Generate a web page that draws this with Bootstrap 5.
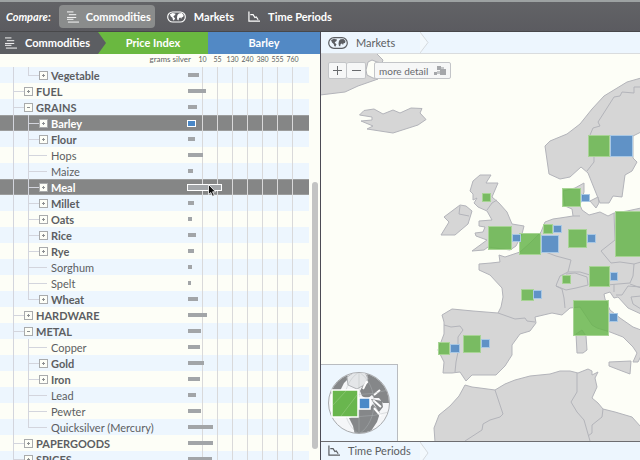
<!DOCTYPE html>
<html lang="en">
<head>
<meta charset="utf-8">
<meta name="viewport" content="width=device-width, initial-scale=1">
<title>Compare commodities</title>
<link href="https://cdn.jsdelivr.net/npm/bootstrap@5.3.0/dist/css/bootstrap.min.css" rel="stylesheet">
<style>
  :root { --ink: #5c5e62; --cream: #fdfef7; --ice: #edf6fe; --guide: #d3d5dd; --gridline: #d9d9da; }
  body { font-family: Lato, "Open Sans", sans-serif; font-size: 11px; line-height: 16px; color: var(--ink); background: var(--cream); }
  button { font: inherit; color: inherit; }
  .topbar { height: 32px; background: linear-gradient(#626366, #5b5b60); border-top: 2px solid #9da2a2; border-bottom: 1px solid #48484a; color: #fff; font-weight: 700; padding-left: 6px; }
  .tab-btn { height: 23px; border: 0; border-radius: 4px; background: none; padding: 0 6px 0 0; gap: 8px; }
  .tab-btn.chosen { background: #8a8c8c; padding: 0 4px 0 8px; gap: 7px; margin: 0 12px 0 8px; }
  .crumbs { height: 22px; flex: none; }
  .left-crumbs { background: #6ab840; color: #fff; font-weight: 700; }
  .crumb-dark { background: var(--ink); width: 106px; padding-left: 5px; gap: 8px; clip-path: polygon(0 0, 98px 0, 100% 50%, 98px 100%, 0 100%); }
  .crumb-blue { background: #5289c5; width: 112px; }
  .left-pane { background: var(--cream); }
  .scale { height: 13px; font-size: 8px; line-height: 10px; padding-right: 1px; }
  .scale-ticks { width: 128px; padding-left: 4px; font-size: 7px; }
  .scale-ticks span { width: 15px; text-align: center; }
  .tree-row { height: 16px; padding-left: 13px; }
  .tree-row:nth-child(odd) { background: var(--ice); }
  .tree-row.picked { background: #858686; color: #fff; box-shadow: inset 0 1px #9c9d9d, inset 0 -1px #9c9d9d; font-weight: 700; }
  .trunk { width: 15px; background: linear-gradient(var(--guide), var(--guide)) 0 0 / 1px 100% no-repeat; }
  .twig { width: 11px; background: linear-gradient(var(--guide), var(--guide)) 0 0 / 1px 100% no-repeat, linear-gradient(var(--guide), var(--guide)) 0 8px / 100% 1px no-repeat; }
  .twig.leaf { width: 19px; margin-right: 1px; }
  .twig.end { background-size: 1px 9px, 100% 1px; }
  .toggle { width: 9px; height: 9px; padding: 0; border: 1px solid #a9abac; background: linear-gradient(#8d9092, #8d9092) 50% 50% / 3px 1px no-repeat, linear-gradient(#8d9092, #8d9092) 50% 50% / 1px 3px no-repeat, var(--cream); }
  .toggle.open { background: linear-gradient(#8d9092, #8d9092) 50% 50% / 3px 1px no-repeat, var(--cream); }
  .label-text { margin-left: 3px; line-height: 18px; }
  .plot { width: 121px; padding-right: 16px; background: linear-gradient(90deg, transparent 14px, var(--gridline) 14px) 0 0 / 15px 100% content-box; }
  .bar { height: 4px; background: #a2a5a8; }
  .bar.framed { height: 7px; margin-left: -1px; border: 1px solid #fff; }
  .bar.barley { background: #4a87c6; }
  .rail { width: 11px; padding-left: 3px; }
  .thumb { width: 6px; height: 267px; margin-top: 115px; border-radius: 3px; background: #c3c4c4; }
  .pointer { left: 208px; top: 5px; z-index: 2; }
  .right-pane { border-left: 1px solid #4c4b55; }
  .right-crumbs { background: var(--ice); border-bottom: 1px solid #d9dcde; padding-left: 7px; gap: 8px; }
  .crumb-name { width: 56px; }
  .crumb-name.wide { width: 64px; }
  .map-tools { top: 8px; left: 7px; gap: 8px; }
  .tool { height: 17px; border: 1px solid #c3c5c8; border-radius: 2px; background: #f6f7f7; padding: 0; color: #696b6e; }
  .zoom-tool { width: 19px; }
  .more-tool { padding: 0 4px; gap: 6px; font-size: 10px; }
  .inset-globe { width: 77px; height: 77px; background: var(--ice); border-top: 1px solid #b9bcc0; border-right: 1px solid #b9bcc0; }
  .bottom-crumbs { height: 19px; background: var(--ice); border-top: 1px solid #6d6d70; padding-left: 7px; gap: 8px; flex: none; line-height: 20px; }
  .green-box { fill: #67b54b; fill-opacity: .84; stroke: #a8d495; stroke-width: 1; }
  .blue-box { fill: #5089c4; fill-opacity: .88; stroke: #a9c8e4; stroke-width: 1; }
</style>
<script src="https://cdn.jsdelivr.net/npm/bootstrap@5.3.0/dist/js/bootstrap.bundle.min.js" defer></script>
</head>
<body class="vh-100 d-flex flex-column overflow-hidden">

<svg class="d-none" aria-hidden="true">
  <symbol id="i-list" viewBox="0 0 13 12"><path d="M0 .5h7M2 3.500h8M0 6.500h10M0 8.500h7M1 11.500h12" stroke="currentColor" fill="none"/></symbol>
  <symbol id="i-world" viewBox="0 0 20 12"><rect x=".7" y=".7" width="18.6" height="10.6" rx="5.3" fill="none" stroke="currentColor" stroke-width="1.2"/><path d="M3 3l3-1.200 3 .7-.5 1.500-1.800 1.200.8 1.300 1 .7-1.200 2.500-1-.6-.6-2.200L4 5.500zM11 3.800l1.500-1.500 3-.4 2 2-.5 2.200-1.400.2-.6 1.600-1-1.500-1.300.6-.6 2.600-1.200-.8-.4-2.400z" fill="currentColor"/></symbol>
  <symbol id="i-trend" viewBox="0 0 13 12"><path d="M1 0v10.500h12M2.500 3.500h3l2 3 1.500-.5 2 3" stroke="currentColor" fill="none" stroke-width="1.300"/></symbol>
</svg>

<nav class="topbar d-flex align-items-center flex-shrink-0" aria-label="Compare">
  <em>Compare:</em>
  <button class="tab-btn chosen d-flex align-items-center" type="button"><svg width="12" height="12"><use href="#i-list"/></svg>Commodities</button>
  <button class="tab-btn d-flex align-items-center me-2" type="button"><svg width="19" height="12"><use href="#i-world"/></svg>Markets</button>
  <button class="tab-btn d-flex align-items-center" type="button"><svg width="12" height="12"><use href="#i-trend"/></svg>Time Periods</button>
</nav>

<main class="d-flex flex-grow-1 overflow-hidden">
  <section class="left-pane w-50 d-flex flex-column">
    <div class="crumbs left-crumbs d-flex">
      <div class="crumb-dark d-flex align-items-center"><svg width="12" height="12"><use href="#i-list"/></svg>Commodities</div>
      <div class="flex-grow-1 d-flex align-items-center justify-content-center pe-2">Price Index</div>
      <div class="crumb-blue d-flex align-items-center justify-content-center">Barley</div>
    </div>
    <div class="scale d-flex justify-content-end flex-shrink-0">
      <span>grams silver</span>
      <div class="scale-ticks d-flex"><span>10</span><span>55</span><span>130</span><span>240</span><span>380</span><span>555</span><span>760</span></div>
    </div>
    <div class="d-flex flex-grow-1 overflow-hidden">
      <ul class="list-unstyled mb-0 flex-grow-1" id="commodity-tree"></ul>
      <div class="rail"><div class="thumb"></div></div>
    </div>
  </section>

  <section class="right-pane w-50 d-flex flex-column">
    <div class="crumbs right-crumbs d-flex align-items-center">
      <svg width="20" height="12"><use href="#i-world"/></svg><span class="crumb-name">Markets</span>
      <svg class="h-100" width="9" viewBox="0 0 9 22" preserveAspectRatio="none"><path d="M0 0l8 11-8 11" fill="#f3f9fd" stroke="#d5d9dd"/></svg>
    </div>
    <div class="flex-grow-1 position-relative overflow-hidden">
      <svg class="d-block w-100 h-100" viewBox="321 54 319 387" preserveAspectRatio="xMinYMin slice" role="img" aria-label="Map of European markets">
        <g fill="#d6d6d6" stroke="#b3b4ba" stroke-linejoin="round">
          <path d="M320 53H376L383 60 382 63 377 62 372 60 368 62 366 70 367 75 373 78 378 79 358 86 345 92 320 95Z"/>
          <path d="M359.500 115L364 110.500 374 109 383 114 393 110 400 113 411 108 422 108.500 420 113 426 119.500 418 125 393 133 367 129 373 126 361 121 372 120 372 117Z"/>
          <path d="M641 78L627 82 604 96 592 109 580 124 567 134 550 141 545 146 549 174 560 179 570 177 581 167 588 173 600 203 609 203 613 196 622 197 625 175 632 171 637 162 633 158 633 136 641 132Z"/>
          <path d="M641 87H634V93L622 92 620 96 614 97 607 108 598 122 600 126 593 128 590 135M594 157V162L587 171" fill="none"/>
          <path d="M590 201L598 197 599 203 596 208Z"/>
          <path d="M480 175H491L486 183 498 183 492 197 499 203 507 212 512 224 524 226 522 234 516 246 510 250 488 247 484 250 472 251 487 240 476 236 475 233 483 232 485 227 479 226 479 221 492 220 487 211 478 207 474 203 477 198 473 200 473 194 470 191 473 181Z"/>
          <path d="M487 210L492 203 497 200M460 205L466 206 472 211 468 224 455 235 441 235 449 222 444 217Z"/><path d="M460 206L459 214 469 216" fill="none"/>
          <path d="M641 208L627 211 614 213 608 216 600 212 589 215 582 210 580 205 584 192 584 183 575 188 563 191 565 206 572 209 573 216 560 218 553 219 545 222 541 232 530 243 520 252 505 257 499 255 500 262 491 263 479 264 479 270 490 275 502 288 503 297 501 307 498 313 473 311 452 309 442 315 444 322 444 334 438 350 444 362 443 373 452 373 460 372 466 381 472 375 496 375 505 366 512 355 512 345 520 334 530 331 536 323 535 317 552 313 562 315 570 308 580 307 592 325 597 328 610 332 623 337 633 347 637 353 633 362 638 362 641 356V330L633 327 620 318 610 310 605 299 604 294 610 292 614 298 618 297 628 308 641 314Z"/>
          <path d="M498 313L515 319 525 318 527 321 535 322M444 325L451 327 460 326 463 330 458 337 458 352 456 362 455 372M540 250L556 256 571 260 568 272 560 276 557 283 556 286 562 289 564 298 565 308M556 286L566 290 576 288 588 285 587 277 575 273 566 274M568 272H580L590 275M573 216H580M614 213L615 240 601 251 611 263 620 262 634 264 641 262M634 264L633 276 630 283 618 284 607 285M614 284V292M630 284L641 288M641 296L631 297 633 304 641 309M641 287L628 286 622 295 616 295" fill="none"/>
          <path d="M609 362L631 361 630 374 622 371 609 366ZM576 334L577 353 583 353 587 350 586 336 582 330Z"/>
          <path d="M435 442L434 428 439 415 450 406 459 396 465 385 472 387 480 388 495 390 505 384 515 380 530 376 550 374 560 371 570 371 578 373 588 369 592 371 592 375 598 372 595 378 597 387 592 398 598 403 603 409 615 412 632 417 641 427V442Z"/>
          <path d="M495 390L500 405 503 414 500 417 490 420 483 424 482 430 465 441M577 373L577 392 571 402 577 412 584 420 590 441M603 409L602 417 592 425 592 433 588 436" fill="none"/>
        </g>
        <g class="green-box">
          <rect x="588.500" y="135.500" width="21" height="21"/><rect x="562.500" y="188.500" width="18" height="18"/><rect x="482.500" y="193.500" width="8" height="8"/>
          <rect x="488.500" y="226.500" width="23" height="23"/><rect x="519.500" y="233.500" width="21" height="21"/><rect x="543.500" y="224.500" width="9" height="9"/>
          <rect x="568.500" y="229.500" width="18" height="18"/><rect x="615.500" y="211.500" width="30" height="45"/><rect x="589.500" y="266.500" width="20" height="20"/>
          <rect x="562.500" y="275.500" width="8" height="8"/><rect x="521.500" y="289.500" width="12" height="11"/><rect x="573.500" y="300.500" width="35" height="35"/>
          <rect x="463.500" y="335.500" width="17" height="17"/><rect x="438.500" y="342.500" width="11" height="12"/>
        </g>
        <g class="blue-box">
          <rect x="610.500" y="135.500" width="22" height="21"/><rect x="581.500" y="194.500" width="8" height="7"/><rect x="512.500" y="234.500" width="8" height="7"/>
          <rect x="541.500" y="235.500" width="17" height="17"/><rect x="553.500" y="225.500" width="8" height="7"/><rect x="587.500" y="234.500" width="8" height="8"/>
          <rect x="610.500" y="272.500" width="7" height="8"/><rect x="533.500" y="290.500" width="8" height="8"/><rect x="609.500" y="313.500" width="8" height="8"/>
          <rect x="481.500" y="339.500" width="8" height="8"/><rect x="450.500" y="344.500" width="9" height="8"/>
        </g>
      </svg>
      <div class="map-tools position-absolute d-flex">
        <div class="d-flex">
          <button class="tool zoom-tool d-flex align-items-center justify-content-center" type="button" aria-label="Zoom in"><svg width="9" height="9"><path d="M4.500 0v9M0 4.500h9" stroke="currentColor"/></svg></button>
          <button class="tool zoom-tool d-flex align-items-center justify-content-center border-start-0" type="button" aria-label="Zoom out"><svg width="9" height="9"><path d="M0 4.500h9" stroke="currentColor"/></svg></button>
        </div>
        <button class="tool more-tool d-flex align-items-center" type="button">more detail<svg width="12" height="10" fill="#a5a7aa"><path d="M3 0h4v4H3zM6 3h6v6H6zM0 6h3v3H0z"/><path d="M7 1h3v2H7zM3 5h3v3H3z" fill="#c4c6c8"/></svg></button>
      </div>
      <div class="inset-globe position-absolute bottom-0 start-0">
        <svg class="d-block w-100 h-100" viewBox="0 0 76 76" role="img" aria-label="Globe overview">
          <defs><clipPath id="disc"><circle cx="38" cy="38" r="30"/></clipPath></defs>
          <circle cx="38" cy="38" r="30.500" fill="#f5f6f8" stroke="#a9abae"/>
          <g clip-path="url(#disc)">
            <path d="M8 28L14 16 24 9 29 12 23 18 19 26 14 30ZM28 53L34 53 40 56 44 64 48 67 40 70 34 70 32 61ZM46 8L56 10 65 20 68 30 68 38 62 38 58 33 53 33 51 30 46 34 41 31 39 26 42 20 47 18ZM38 40L48 44 52 39 59 48 56 57 50 66 43 68 38 60 28 53 36 50ZM50 34L61 36 62 42 58 47Z" fill="#858789"/>
            <path d="M26 12L32 8 44 7 47 14 43 20 36 24 27 20Z" fill="#e4e6e8" stroke="#b1b3b6"/>
            <path d="M52 35L60 42M53 43L60 51M53 30L59 25M42 24L46 16" stroke="#fff" stroke-width="2" fill="none"/>
            <path d="M38 7C18 20 18 56 38 69M38 7C58 20 58 56 38 69M38 7V69M9 25Q38 34 67 25M8 47Q38 56 68 47" fill="none" stroke="#b5b8bc" stroke-opacity=".4"/>
          </g>
          <rect x="11" y="25" width="26" height="27" fill="#69b64e" stroke="#fff" stroke-width="1.500"/>
          <path d="M12 40L25 26M20 51L36 30" stroke="#84c46c"/>
          <rect x="38" y="33" width="11" height="11" fill="#4c8ac8" stroke="#fff" stroke-width="1.500"/>
        </svg>
      </div>
    </div>
    <div class="bottom-crumbs d-flex align-items-center">
      <svg width="12" height="12"><use href="#i-trend"/></svg><span class="crumb-name wide text-nowrap">Time Periods</span>
      <svg class="align-self-start" width="9" height="18"><path d="M0 0l8 11-8 11" fill="#f3f9fd" stroke="#d5d9dd"/></svg>
    </div>
  </section>
</main>

<script>
  // name, kind (group | branch | leaf), bar length, flags
  const commodities = [
    ["Vegetable", "branch", 11, "end"], ["FUEL", "group", 18], ["GRAINS", "group", 9, "open"],
    ["Barley", "branch", 9, "picked barley"], ["Flour", "branch", 7], ["Hops", "leaf", 15], ["Maize", "leaf", 5],
    ["Meal", "branch", 35, "picked hover"], ["Millet", "branch", 6], ["Oats", "branch", 4], ["Rice", "branch", 8],
    ["Rye", "branch", 6], ["Sorghum", "leaf", 4], ["Spelt", "leaf", 3], ["Wheat", "branch", 10, "end"],
    ["HARDWARE", "group", 19], ["METAL", "group", 13, "open"], ["Copper", "leaf", 12], ["Gold", "branch", 16],
    ["Iron", "branch", 12], ["Lead", "leaf", 8], ["Pewter", "leaf", 13], ["Quicksilver (Mercury)", "leaf", 25, "end"],
    ["PAPERGOODS", "group", 25], ["SPICES", "group", 24]
  ];
  const cursor = '<svg class="pointer position-absolute" width="9" height="13"><path d="M.5 .5v10l2.300-2 1.700 3.800 1.800-.8-1.700-3.700h3z" fill="#111" stroke="#fff" stroke-width=".8"/></svg>';
  document.getElementById("commodity-tree").innerHTML = commodities.map(([name, kind, size, flags = ""]) => {
    const has = f => flags.includes(f);
    const leaf = kind === "leaf";
    return `<li class="tree-row d-flex position-relative ${has("picked") ? "picked" : ""} ${leaf ? "" : "fw-bold"}">
      ${kind === "group" ? "" : '<span class="trunk"></span>'}<span class="twig ${leaf ? "leaf" : ""} ${has("end") ? "end" : ""}"></span>
      ${leaf ? "" : `<button type="button" class="toggle align-self-center ${has("open") ? "open" : ""}" aria-label="Toggle ${name}"></button>`}
      <span class="label-text flex-grow-1 text-nowrap">${name}</span>
      <span class="plot d-flex align-items-center"><span class="bar flex-shrink-0 ${has("picked") ? "framed" : ""} ${has("barley") ? "barley" : ""}" style="width:${size}px"></span></span>
      ${has("hover") ? cursor : ""}</li>`;
  }).join("");
</script>
</body>
</html>
